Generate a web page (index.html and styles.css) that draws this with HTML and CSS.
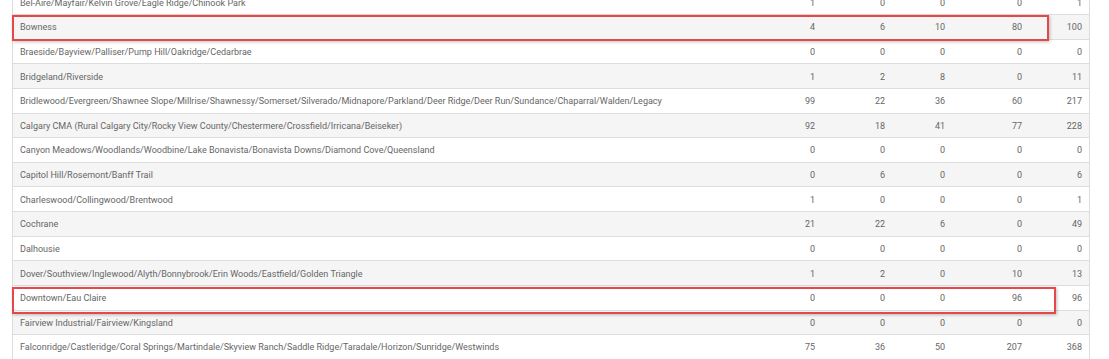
FILE: index.html
```html
<!DOCTYPE html>
<html>
<head>
<meta charset="utf-8">
<link rel="stylesheet" href="styles.css">
</head>
<body>
<div class="wrap">
  <div class="table">
    <div class="row"><span class="name">Bel-Aire/Mayfair/Kelvin Grove/Eagle Ridge/Chinook Park</span><span>1</span><span>0</span><span>0</span><span>0</span><span>1</span></div>
    <div class="row alt"><span class="name">Bowness</span><span>4</span><span>6</span><span>10</span><span>80</span><span>100</span></div>
    <div class="row"><span class="name">Braeside/Bayview/Palliser/Pump Hill/Oakridge/Cedarbrae</span><span>0</span><span>0</span><span>0</span><span>0</span><span>0</span></div>
    <div class="row alt"><span class="name">Bridgeland/Riverside</span><span>1</span><span>2</span><span>8</span><span>0</span><span>11</span></div>
    <div class="row"><span class="name">Bridlewood/Evergreen/Shawnee Slope/Millrise/Shawnessy/Somerset/Silverado/Midnapore/Parkland/Deer Ridge/Deer Run/Sundance/Chaparral/Walden/Legacy</span><span>99</span><span>22</span><span>36</span><span>60</span><span>217</span></div>
    <div class="row alt"><span class="name">Calgary CMA (Rural Calgary City/Rocky View County/Chestermere/Crossfield/Irricana/Beiseker)</span><span>92</span><span>18</span><span>41</span><span>77</span><span>228</span></div>
    <div class="row"><span class="name">Canyon Meadows/Woodlands/Woodbine/Lake Bonavista/Bonavista Downs/Diamond Cove/Queensland</span><span>0</span><span>0</span><span>0</span><span>0</span><span>0</span></div>
    <div class="row alt"><span class="name">Capitol Hill/Rosemont/Banff Trail</span><span>0</span><span>6</span><span>0</span><span>0</span><span>6</span></div>
    <div class="row"><span class="name">Charleswood/Collingwood/Brentwood</span><span>1</span><span>0</span><span>0</span><span>0</span><span>1</span></div>
    <div class="row alt"><span class="name">Cochrane</span><span>21</span><span>22</span><span>6</span><span>0</span><span>49</span></div>
    <div class="row"><span class="name">Dalhousie</span><span>0</span><span>0</span><span>0</span><span>0</span><span>0</span></div>
    <div class="row alt"><span class="name">Dover/Southview/Inglewood/Alyth/Bonnybrook/Erin Woods/Eastfield/Golden Triangle</span><span>1</span><span>2</span><span>0</span><span>10</span><span>13</span></div>
    <div class="row"><span class="name">Downtown/Eau Claire</span><span>0</span><span>0</span><span>0</span><span>96</span><span>96</span></div>
    <div class="row alt"><span class="name">Fairview Industrial/Fairview/Kingsland</span><span>0</span><span>0</span><span>0</span><span>0</span><span>0</span></div>
    <div class="row"><span class="name">Falconridge/Castleridge/Coral Springs/Martindale/Skyview Ranch/Saddle Ridge/Taradale/Horizon/Sunridge/Westwinds</span><span>75</span><span>36</span><span>50</span><span>207</span><span>368</span></div>
  </div>
  <div class="mark mark-bowness"></div>
  <div class="mark mark-downtown"></div>
</div>
</body>
</html>
```

FILE: styles.css
```css
html, body {
  margin: 0;
  padding: 0;
  background: #ffffff;
}
body {
  font-family: Roboto, "Liberation Sans", sans-serif;
  font-size: 9px;
  color: #666666;
  overflow: hidden;
}
.wrap {
  position: relative;
  width: 1109px;
  height: 359px;
  overflow: hidden;
}
.table {
  margin-left: 12px;
  margin-top: -9.64px;
  width: 1078px;
  box-sizing: border-box;
  border-left: 1px solid #dddddd;
  border-right: 1px solid #dddddd;
}
.row {
  display: grid;
  grid-template-columns: 725px 70px 70px 60px 77px 60px;
  align-items: center;
  height: 24.64px;
  box-sizing: border-box;
  padding: 1px 7px 0;
  border-bottom: 1px solid #dddddd;
  background: #ffffff;
}
.row.alt {
  background: #f5f5f5;
}
.row span {
  text-align: right;
  white-space: nowrap;
}
.row .name {
  text-align: left;
}
.mark {
  position: absolute;
  left: 12px;
  box-sizing: border-box;
  border: 2px solid #e8474a;
  box-shadow: 1px 1px 3px rgba(0, 0, 0, 0.25);
}
.mark-bowness {
  top: 15px;
  width: 1037px;
  height: 26px;
}
.mark-downtown {
  top: 287px;
  width: 1044px;
  height: 27px;
}
```
